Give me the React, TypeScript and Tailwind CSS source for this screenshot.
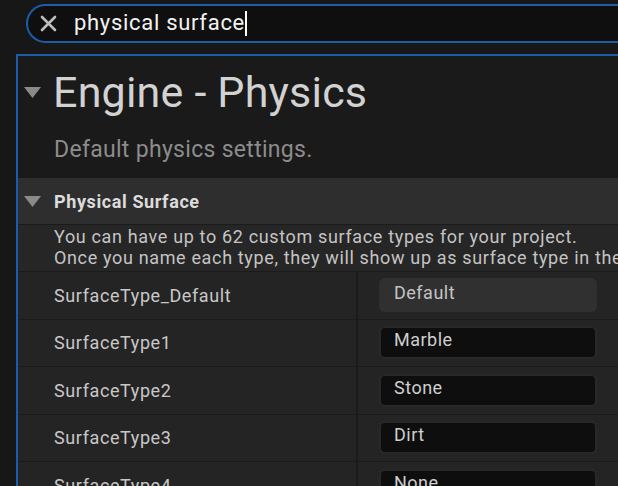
import React from 'react'

const rows = [
  { label: 'SurfaceType_Default', value: 'Default', locked: true },
  { label: 'SurfaceType1', value: 'Marble' },
  { label: 'SurfaceType2', value: 'Stone' },
  { label: 'SurfaceType3', value: 'Dirt' },
  { label: 'SurfaceType4', value: 'None' },
]

function Caret({ className = '' }: { className?: string }) {
  return (
    <svg width="17" height="11" viewBox="0 0 17 11" className={className}>
      <path d="M0 0 H17 L8.5 11 Z" fill="#8a8a8a" />
    </svg>
  )
}

export default function App() {
  return (
    <div className="w-[618px] h-[486px] overflow-hidden bg-[#171717] font-['Roboto',sans-serif]">
      {/* Search box */}
      <div className="pt-[4px] pl-[26px]">
        <div className="h-[39px] w-[640px] rounded-l-full border-2 border-r-0 border-[#1b5dab] bg-[#0f0f0f] flex items-center pl-[12px]">
          <svg width="17" height="17" viewBox="0 0 17 17" className="shrink-0">
            <path d="M2 2 L15 15 M15 2 L2 15" stroke="#bdbdbd" strokeWidth="2.6" strokeLinecap="round" />
          </svg>
          <span className="ml-[17px] text-[22px] tracking-[0.7px] leading-[26px] text-[#f2f2f2] mb-[2px]">physical surface</span>
          <span className="w-[2px] h-[25px] bg-white" />
        </div>
      </div>

      {/* Settings panel */}
      <div className="mt-[11px] ml-[16px] border-l-2 border-t-2 border-[#1b5dab] bg-[#1a1a1a]">
        <div className="flex items-center pt-[11px] pl-[6px]">
          <Caret />
          <h1 className="ml-[12px] text-[43px] tracking-[0.2px] leading-[50px] text-[#d2d2d2]">Engine - Physics</h1>
        </div>
        <p className="mt-[19px] pl-[36px] text-[23px] tracking-[0.3px] leading-[28px] text-[#8c8c8c]">Default physics settings.</p>

        {/* Category */}
        <div className="mt-[14px] h-[46px] bg-[#2e2e2e] flex items-center pl-[6px]">
          <Caret />
          <span className="ml-[13px] text-[18px] tracking-[0.6px] font-bold text-[#dcdcdc]">Physical Surface</span>
        </div>
        <div className="h-[47px] border-t border-[#1b1b1b] bg-[#262626] pl-[36px] pt-[1px] text-[18px] tracking-[0.65px] leading-[21px] text-[#c4c4c4] whitespace-nowrap">
          <div>You can have up to 62 custom surface types for your project.</div>
          <div>Once you name each type, they will show up as surface type in the physical material.</div>
        </div>

        {rows.map((r) => (
          <div key={r.label} className="h-[47.5px] border-t border-[#1b1b1b] bg-[#242424] flex">
            <div className="w-[340px] shrink-0 border-r-2 border-[#1b1b1b] flex items-center pl-[36px] text-[18px] tracking-[0.6px] text-[#c8c8c8]">
              {r.label}
            </div>
            <div className="flex items-center pl-[21px]">
              <div
                className={
                  r.locked
                    ? 'w-[218px] h-[34px] rounded-[6px] bg-[#303030] flex items-center pl-[15px] pb-[6px] text-[18px] tracking-[0.5px] text-[#c4c4c4]'
                    : 'w-[218px] h-[33px] rounded-[6px] bg-[#0e0e0e] border-2 border-[#282828] flex items-center pl-[13px] pb-[6px] text-[18px] tracking-[0.5px] text-[#cfcfcf]'
                }
              >
                {r.value}
              </div>
            </div>
          </div>
        ))}
      </div>
    </div>
  )
}
